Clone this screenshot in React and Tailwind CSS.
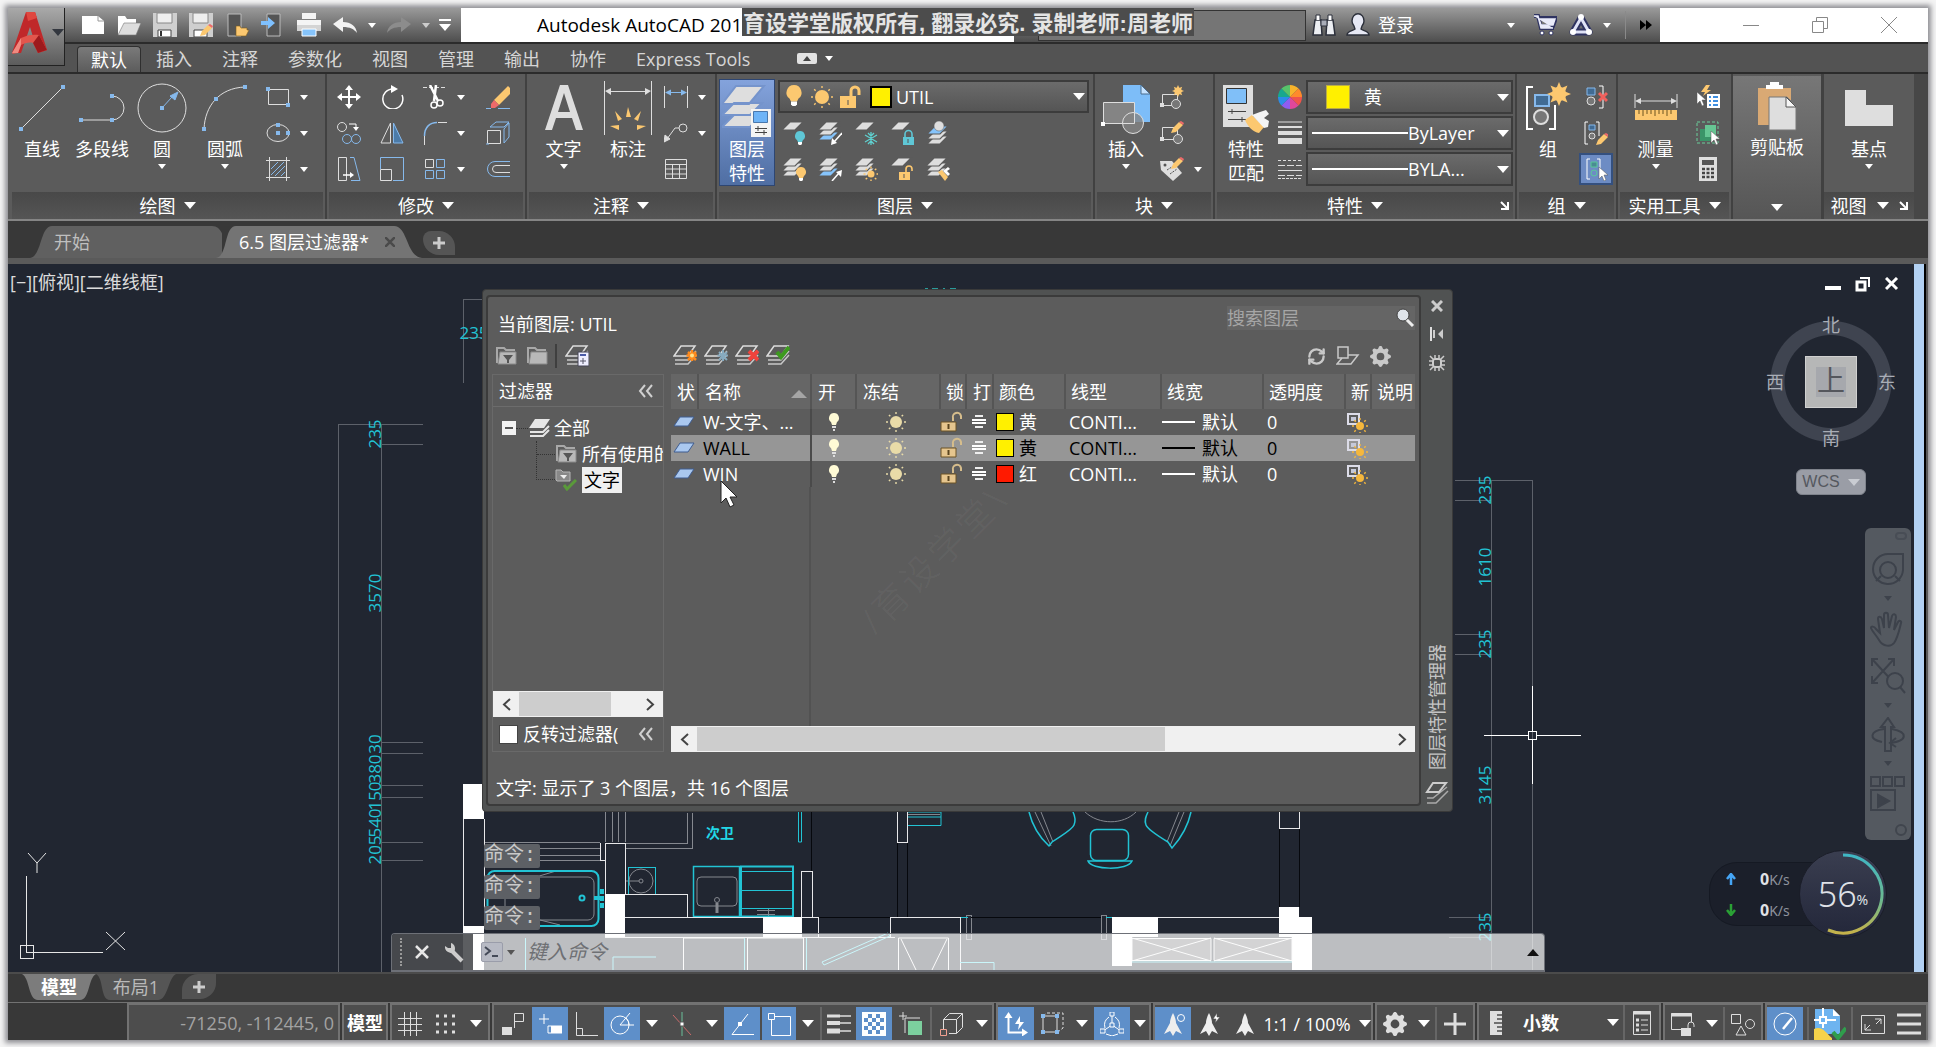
import React from "react";
import { LuRefreshCw } from "react-icons/lu";
import { BsGearFill } from "react-icons/bs";

const W = "#dedede";
const B = "#86b9ec";
const O = "#fcc870";

/* ---------- small helpers ---------- */

const Svg = ({ w = 24, h = 24, children }) => (
  <svg width={w} height={h} viewBox={`0 0 ${w} ${h}`} fill="none" stroke={W} className="shrink-0">
    {children}
  </svg>
);

const Caret = ({ big, color = "#fff" }) => (
  <svg width={big ? 12 : 8} height={big ? 7 : 5} viewBox="0 0 12 7" preserveAspectRatio="none" className="shrink-0">
    <path d="M0 0h12L6 7z" fill={color} />
  </svg>
);

const Btn = ({ label, className = "", children }) => (
  <button type="button" aria-label={label} className={`flex items-center justify-center ${className}`}>
    {children}
  </button>
);

const Dot = ({ x, y, c = B }) => <rect x={x - 2} y={y - 2} width="4" height="4" fill={c} stroke="none" />;

const Sun = ({ cx, cy, r = 4, c = O }) => (
  <g stroke={c} strokeWidth="1.4">
    <circle cx={cx} cy={cy} r={r} fill={c} stroke="none" />
    {[0, 45, 90, 135, 180, 225, 270, 315].map((a) => (
      <path key={a} d={`M${cx} ${cy - r - 2}v-2`} transform={`rotate(${a} ${cx} ${cy})`} />
    ))}
  </g>
);

// eight-pointed burst used on the "new" style commands
const Burst = ({ cx, cy, r }) => (
  <g fill={O} stroke="none">
    <circle cx={cx} cy={cy} r={r * 0.6} />
    {[0, 45, 90, 135, 180, 225, 270, 315].map((a) => (
      <path
        key={a}
        d={`M${cx} ${cy - r}l${r * 0.25} ${r * 0.6}h${-r * 0.5}z`}
        transform={`rotate(${a} ${cx} ${cy})`}
      />
    ))}
  </g>
);

const Bulb = ({ x, y, c = O }) => (
  <g stroke="none">
    <path d={`M${x} ${y}a5 5 0 0 1 3 9l-1 2h-4l-1-2a5 5 0 0 1 3-9z`} fill={c} />
    <path d={`M${x - 2} ${y + 11}h4v2l-1 1h-2l-1-1z`} fill="#fff" />
  </g>
);

const Lock = ({ x, y, c = O, open }) => (
  <g>
    <rect x={x} y={y} width="11" height="8" fill={c} stroke="none" />
    <path
      d={open ? `M${x + 7} ${y}v-3a3 3 0 0 1 6 0v2` : `M${x + 2} ${y}v-3a3 3 0 0 1 7 0v3`}
      stroke={c}
      strokeWidth="1.6"
    />
    <path d={`M${x + 5} ${y + 2}v4`} stroke="#555" />
  </g>
);

const Pencil = ({ x, y }) => (
  <g stroke="none" transform={`translate(${x} ${y})`}>
    <path d="M0 12l2-5 6-6 4 3-7 7z" fill={O} />
    <path d="M8 1l2-1 3 2-1 2z" fill="#ee6a6a" />
  </g>
);

const Pointer = ({ x, y }) => (
  <path
    transform={`translate(${x} ${y})`}
    d="M0 0v12l3-3 2 5 2-1-2-5h4z"
    fill="#fff"
    stroke="#555"
    strokeWidth=".5"
  />
);

const Layer = ({ y = 0, c = W }) => (
  <path d={`M8 ${y}h13l-8 8H0z`} fill={c} stroke="#5b5b5b" strokeWidth="1.2" />
);

const Stack = ({ colors = [W, W, W] }) => (
  <g>
    <Layer y={11} c={colors[2]} />
    <Layer y={6} c={colors[1]} />
    <Layer y={1} c={colors[0]} />
  </g>
);

/* ---------- title bar ---------- */

const Logo = () => (
  <button
    type="button"
    aria-label="AutoCAD"
    className="absolute top-0 left-0 z-10 flex h-[58px] w-[57px] items-center gap-1 border-r border-b border-[#222] bg-linear-to-b from-[#a9a9a9] to-[#5c5c5c] pb-2 pl-1"
  >
    <svg width="36" height="44" viewBox="0 0 36 44" className="shrink-0">
      <path d="M0 42L14 1h9l12 38-9 3-8-26-9 26z" fill="#c0282a" />
      <path d="M14 1h9l2 6-9 3z" fill="#e0473f" />
      <path d="M9 27c6-3 12-4 18-3l8 15-9 3-5-10c-4-1-8 0-12 2l-3 8-6 1z" fill="#e2564d" />
      <path d="M26 42l-5-10 6-8 8 15z" fill="#9d1a1d" />
      <path d="M0 42l9-15v7l-3 8z" fill="#f08a80" />
    </svg>
    <Caret big color="#33373f" />
  </button>
);

const quickAccess = [
  ["新建", <Svg><path d="M1 3h16l6 5v13H1z" fill="#fff" stroke="none" /><path d="M17 3v5h6" stroke="#999" /></Svg>],
  ["打开", <Svg><path d="M1 22V3h7l2 3h9v4H8z" fill="#fff" stroke="none" /><path d="M1 22l6-12h17l-5 12z" fill="#ddd" stroke="#777" strokeWidth=".6" /></Svg>],
  ["保存", <Svg><path d="M0 0h24v24H0z" fill="#cfcfcf" stroke="none" /><path d="M4 0h15v10H4z" fill="#eee" stroke="#888" /><path d="M5 17h13v7H5z" fill="#fff" stroke="#444" /><path d="M8 18v5" stroke="#333" strokeWidth="2" /></Svg>],
  ["另存为", <Svg><path d="M0 0h24v24H0z" fill="#cfcfcf" stroke="none" /><path d="M4 0h15v10H4z" fill="#eee" stroke="#888" /><path d="M5 17h13v7H5z" fill="#fff" stroke="#444" /><Pencil x={11} y={11} /></Svg>],
  ["从移动设备打开", <Svg><path d="M3 1h13v22H3z" fill="#555" stroke="#bbb" /><path d="M11 23V13h4l1 2h6v2h2l-3 6z" fill={O} stroke="#7a5a20" strokeWidth=".6" /></Svg>],
  ["保存到移动设备", <Svg><path d="M6 1h13v22H6z" fill="#555" stroke="#bbb" /><path d="M0 8h7V4l7 6-7 6v-4H0z" fill="#7fc1ff" stroke="none" /></Svg>],
  ["打印", <Svg><path d="M5 0h14v6H5zM0 7h24v10H0z" fill="#f4f4f4" stroke="none" /><path d="M0 12h24v6H0z" fill="#d4d4d4" stroke="none" /><path d="M5 16h14v7H5z" fill="#86c4fb" stroke="#fff" /></Svg>],
  ["放弃", <Svg><path d="M0 11l10-7v5c8 0 13 4 14 11-3-4-7-6-14-6v5z" fill="#f2f2f2" stroke="none" /></Svg>, "#fff"],
  ["重做", <Svg><path d="M24 11L14 4v5C6 9 1 13 0 20c3-4 7-6 14-6v5z" fill="#8c8c8c" stroke="none" /></Svg>, "#ccc"],
];

const TitleBar = () => (
  <header className="flex h-[34px] bg-linear-to-b from-[#9a9a9a] to-[#4e4e4e]">
    <div className="flex w-[453px] shrink-0 items-center pl-[67px]">
      {quickAccess.map(([label, icon, caret]) => (
        <div key={label} className="flex items-center">
          <Btn label={label} className="w-9">{icon}</Btn>
          {caret && <Btn label={`${label} 列表`} className="w-[18px]"><Caret color={caret} /></Btn>}
        </div>
      ))}
      <Btn label="自定义" className="ml-1 w-3 flex-col gap-[3px]">
        <span className="h-[2px] w-3 bg-white" />
        <Caret big />
      </Btn>
    </div>
    <div className="relative flex min-w-0 flex-1 items-center bg-white pl-[76px] text-black">
      <span className="text-[19px] whitespace-nowrap">Autodesk AutoCAD 201</span>
      <div className="absolute top-0 left-[281px] z-10 flex h-7 w-[452px] items-center justify-center bg-[#4c4c4c] pt-[2px] font-['Liberation_Sans','Noto_Sans_CJK_SC',sans-serif] text-[22px] font-bold whitespace-nowrap text-[#e4e4e4]">
        育设学堂版权所有, 翻录必究. 录制老师:周老师
      </div>
    </div>
    <div className="flex w-[646px] shrink-0 items-center">
      <input
        aria-label="搜索"
        className="ml-6 h-[31px] w-[268px] border border-[#333] bg-[#757575] outline-none"
      />
      <Btn label="查找" className="w-9">
        <Svg><path d="M1 22l2-15h6l1 15zM14 22l1-15h6l2 15z" fill="#eceef2" stroke="#2b2f3a" strokeWidth="1.5" /><path d="M9 7h6v6H9z" fill="#a9adb8" stroke="#2b2f3a" /><path d="M4 7V2h4v5M16 7V2h4v5" fill="#fff" stroke="#2b2f3a" /></Svg>
      </Btn>
      <Btn label="登录" className="gap-2 pl-1 text-lg text-white">
        <Svg><path d="M1 22c0-4 6-4 8-6l-1-3a6 7 0 1 1 8 0l-1 3c2 2 8 2 8 6z" fill="#e6e8f4" stroke="#2b2f3a" strokeWidth="1.4" /></Svg>
        登录
      </Btn>
      <Btn label="账户列表" className="ml-auto w-4"><Caret /></Btn>
      <Btn label="购物车" className="ml-3 w-7">
        <Svg><path d="M1 3h4l3 12h13M6 5h17l-3 8H8" stroke="#2f3361" strokeWidth="4" /><path d="M1 3h4l3 12h12M6 6h16l-2 6H8z" fill="#e9ebfa" stroke="#e9ebfa" strokeWidth="1.5" /><circle cx="9" cy="20" r="2" fill="#fff" stroke="#2f3361" /><circle cx="18" cy="20" r="2" fill="#fff" stroke="#2f3361" /></Svg>
      </Btn>
      <Btn label="A360" className="ml-2 w-7">
        <Svg><path d="M12 5l8 14H4z" stroke="#2f3361" strokeWidth="7" strokeLinejoin="round" /><path d="M12 5l8 14H4z" stroke="#dfe2f6" strokeWidth="3" /><circle cx="12" cy="4" r="3" fill="#fff" stroke="none" /><circle cx="4" cy="19" r="3" fill="#fff" stroke="none" /><circle cx="20" cy="19" r="3" fill="#fff" stroke="none" /></Svg>
      </Btn>
      <Btn label="A360 列表" className="ml-1 w-4"><Caret /></Btn>
      <span className="mx-[10px] h-7 w-px bg-[#8a8a8a]" />
      <Btn label="更多" className="mr-1 w-5">
        <Svg w={12} h={10}><path d="M0 0l6 5-6 5zM6 0l6 5-6 5z" fill="#000" stroke="none" /></Svg>
      </Btn>
    </div>
    <div className="flex w-[268px] shrink-0 items-center justify-around bg-white pr-1 pl-14">
      <Btn label="最小化"><Svg w={16} h={16}><path d="M0 8.5h16" stroke="#888" /></Svg></Btn>
      <Btn label="还原"><Svg w={16} h={16}><path d="M.5 4.5h11v11H.5zM4.5 4V.5h11v11H12" stroke="#888" /></Svg></Btn>
      <Btn label="关闭"><Svg w={16} h={16}><path d="M0 0l16 16M16 0L0 16" stroke="#888" /></Svg></Btn>
    </div>
  </header>
);

const ribbonTabs = ["默认", "插入", "注释", "参数化", "视图", "管理", "输出", "协作", "Express Tools"];

const RibbonTabs = () => (
  <nav className="flex h-8 items-end border-t-2 border-b-2 border-[#2b2b2b] bg-[#535353] pl-[69px] text-lg text-[#d6d6d6]">
    {ribbonTabs.map((tab, i) => (
      <button
        key={tab}
        type="button"
        className={
          i === 0
            ? "h-[26px] rounded-t border border-b-0 border-[#2f2f2f] bg-linear-to-b from-[#7a7a7a] to-[#5c5c5c] px-[13px] leading-6 text-white"
            : "h-[26px] px-[15px] leading-6 whitespace-nowrap"
        }
      >
        {tab}
      </button>
    ))}
    <Btn label="最小化功能区" className="ml-8 h-[28px] gap-2">
      <span className="flex h-[11px] w-5 items-center justify-center rounded-xs bg-[#e2e2e2]">
        <Svg w={8} h={5}><path d="M0 5l4-5 4 5z" fill="#444" stroke="none" /></Svg>
      </span>
      <Caret />
    </Btn>
  </nav>
);

/* ---------- ribbon ---------- */

const Launcher = () => (
  <Svg w={9} h={9}><path d="M1 1l6 6M8 1v7H1" stroke="#fff" strokeWidth="2" /></Svg>
);

const Panel = ({ title, arrow, className = "", children }) => (
  <section className={`flex shrink-0 flex-col border-r-2 border-[#414141] ${className}`}>
    <div className="flex flex-1 items-start pt-[5px]">{children}</div>
    <footer
      className={`relative mx-[2px] flex h-[27px] items-center justify-center gap-2 bg-linear-to-b from-[#484848] to-[#555] text-lg leading-6 text-white ${arrow ? "pr-5" : ""}`}
    >
      {title}
      <Caret big />
      {arrow && <span className="absolute right-1"><Launcher /></span>}
    </footer>
  </section>
);

const Big = ({ lines, arrow, className = "", children }) => (
  <button type="button" className={`flex shrink-0 flex-col items-center text-lg leading-6 text-white ${className}`}>
    <span className="flex h-[58px] items-center justify-center">{children}</span>
    {lines.map((l) => (
      <span key={l} className="whitespace-nowrap">{l}</span>
    ))}
    {arrow && <span className="mt-[3px] flex"><Caret /></span>}
  </button>
);

const Small = ({ label, arrow, className = "", children }) => (
  <span className={`flex h-9 items-center ${className}`}>
    <Btn label={label}>{children}</Btn>
    {arrow && <Btn label={`${label} 列表`} className="ml-[10px]"><Caret /></Btn>}
  </span>
);

const DrawPanel = () => (
  <Panel title="绘图" className="w-[317px]">
    <Big lines={["直线"]} className="w-16">
      <Svg w={48} h={48}><path d="M2 46L46 2" /><Dot x={3} y={45} /><Dot x={45} y={3} /></Svg>
    </Big>
    <Big lines={["多段线"]} className="w-14">
      <Svg w={48} h={32}><path d="M2 28h32a12 12 0 0 0 0-24" /><Dot x={3} y={28} /><Dot x={34} y={28} /><Dot x={34} y={4} /></Svg>
    </Big>
    <Big lines={["圆"]} arrow className="w-16">
      <Svg w={50} h={50}><circle cx="25" cy="25" r="24" /><path d="M25 25l10-11" stroke={B} /><path d="M41 9l-3 8-5-4z" fill={B} stroke={B} /><Dot x={25} y={25} /></Svg>
    </Big>
    <Big lines={["圆弧"]} arrow className="w-[62px]">
      <Svg w={48} h={48}><path d="M3 45C4 22 18 4 44 3" /><Dot x={3} y={45} /><Dot x={15} y={15} /><Dot x={44} y={3} /></Svg>
    </Big>
    <div className="ml-[10px]">
      <Small label="矩形" arrow><Svg><path d="M2.5 4.5h20v15h-20z" /><Dot x={2} y={4} /><Dot x={22} y={20} /></Svg></Small>
      <Small label="椭圆" arrow><Svg><ellipse cx="12" cy="12" rx="11" ry="8.5" /><Dot x={12} y={4} /><Dot x={12} y={12} /><Dot x={22} y={12} /></Svg></Small>
      <Small label="图案填充" arrow><Svg><path d="M0 3.5h24M0 20.5h24M3.5 0v24M20.5 0v24" /><path d="M5 12l7-7M5 18L18 5M9 19L19 9M15 19l4-4" stroke={B} /></Svg></Small>
    </div>
  </Panel>
);

const ModifyPanel = () => (
  <Panel title="修改" className="w-[200px]">
    <div className="ml-[10px] grid grid-cols-[43px_43px_63px_24px]">
      <Small label="移动"><Svg><path d="M12 2v20M2 12h20" stroke="#fff" strokeWidth="2" /><path d="M12 0l4 5H8zM12 24l4-5H8zM0 12l5-4v8zM24 12l-5-4v8z" fill="#fff" stroke="none" /></Svg></Small>
      <Small label="旋转"><Svg><path d="M13 4a10 10 0 1 0 9 6" stroke="#fff" strokeWidth="1.5" /><path d="M11 0l7 4-7 4z" fill="#fff" stroke="none" /></Svg></Small>
      <Small label="修剪" arrow><Svg><path d="M0 2.5h24" strokeDasharray="4 2" /><path d="M7 0l8 16M13 0l-2 16" stroke="#fff" strokeWidth="2.5" /><circle cx="11" cy="20" r="3" stroke="#fff" strokeWidth="1.5" /><circle cx="17" cy="18" r="3" stroke="#fff" strokeWidth="1.5" /></Svg></Small>
      <Small label="删除"><Svg><path d="M0 23.5h5M12 23.5h12" stroke={B} /><path d="M8 15L22 1l2 2v6L13 20z" fill={O} stroke="none" /><path d="M5 19l3-4 5 5-4 3H5z" fill="#ee6a6a" stroke="none" /></Svg></Small>
      <Small label="复制"><Svg><circle cx="5" cy="6" r="4.5" /><circle cx="10" cy="18" r="4.5" stroke={B} /><circle cx="19" cy="18" r="4.5" stroke={B} /><path d="M12 3h7v4" stroke="#fff" /><path d="M16 6h6l-3 4z" fill="#fff" stroke="none" /></Svg></Small>
      <Small label="镜像"><Svg><path d="M10.5 2v20H1z" /><path d="M13.5 2v20H23z" fill="#4c7ba8" stroke={B} /></Svg></Small>
      <Small label="圆角" arrow><Svg><path d="M1.5 24v-9" /><path d="M1.5 15C1.5 6 7 1.5 14 1.5" stroke={B} strokeWidth="1.5" /><path d="M15 1.5h9" /></Svg></Small>
      <Small label="分解"><Svg><path d="M1.5 9.5h13v13h-13z" /><path d="M4 6l6-5h13l-5 5zM18 22l5-6V2l-5 6z" stroke={B} /><path d="M0 23h3" stroke={B} /></Svg></Small>
      <Small label="拉伸"><Svg><path d="M1.5.5h8v23h-8z" /><path d="M13 .5h4l6 23h-9" stroke={B} /><path d="M6 18h9" stroke="#fff" strokeWidth="1.5" /><path d="M13 15l4 3-4 3z" fill="#fff" stroke="none" /></Svg></Small>
      <Small label="缩放"><Svg><path d="M.5 12V.5h23v23H13" stroke={B} /><path d="M.5 12.5h11v11H.5z" /></Svg></Small>
      <Small label="阵列" arrow><Svg><path d="M2.5 2.5h8v8h-8z" /><path d="M13.5 2.5h8v8h-8zM2.5 13.5h8v8h-8zM13.5 13.5h8v8h-8z" stroke={B} /></Svg></Small>
      <Small label="偏移"><Svg><path d="M24 4.5H9a7.5 7.5 0 0 0 0 15h15" stroke={B} /><path d="M24 8.5H10a3.5 3.5 0 0 0 0 7h14" /></Svg></Small>
    </div>
  </Panel>
);

const AnnotatePanel = () => (
  <Panel title="注释" className="w-[190px]">
    <Big lines={["文字"]} arrow className="w-[73px]">
      <Svg w={40} h={50}><path d="M1 47L16 2h8l15 45h-7l-4-12H12L8 47zM14 29h12L20 10z" fill={W} fillRule="evenodd" stroke="none" /></Svg>
    </Big>
    <Big lines={["标注"]} className="w-14">
      <Svg w={48} h={54}>
        <path d="M.5 0v54M47.5 0v54M4 10.5h40" /><path d="M1 10l6-3v7zM47 10l-6-3v7z" fill={W} stroke="none" />
        <path d="M24 26l3 10h-5zM11 30l7 8-4 2zM37 30l-7 8 4 2zM6 45l9-1v5zM42 45l-9-1v5z" fill={O} stroke="none" />
      </Svg>
    </Big>
    <div className="ml-2">
      <Small label="线性" arrow><Svg><path d="M.5 1v22M23.5 1v22" /><path d="M3 7.5h18" stroke={B} /><path d="M1 7.5l6-3v6zM23 7.5l-6-3v6z" fill={B} stroke="none" /></Svg></Small>
      <Small label="引线" arrow><Svg><circle cx="19" cy="7" r="4" /><path d="M15 7h-4L3 18" /><path d="M0 21l1-7 5 4z" fill={W} /></Svg></Small>
      <Small label="表格"><Svg><path d="M1.5 2.5h21v19h-21zM1.5 7.5h21M1.5 12h21M1.5 17h21M8.5 8v14M15.5 8v14" /></Svg></Small>
    </div>
  </Panel>
);

const Combo = ({ label, value, className = "", children }) => (
  <div className={`relative flex items-center border-2 border-[#3c3c3c] bg-linear-to-b from-[#6b6b6b] to-[#555] text-white ${className}`}>
    {children}
    <select aria-label={label} className="h-full min-w-0 flex-1 appearance-none bg-transparent text-lg outline-none">
      <option>{value}</option>
    </select>
    <span className="pointer-events-none absolute right-[2px]"><Caret big /></span>
  </div>
);

const layerTools = [
  ["关", <Svg><Layer y={1} /><Bulb x={18} y={10} c="#5fc7d6" /></Svg>],
  ["隔离", <Svg><Stack colors={[W, W, "#86c4fb"]} /><path d="M24 12l-8 9" stroke="#fff" strokeWidth="1.5" /><path d="M13 24l1-7 5 5z" fill="#fff" stroke="none" /></Svg>],
  ["冻结", <Svg><Layer y={1} /><path d="M17 11v13M11 14l12 7M23 14l-12 7M14 12l3 3 3-3M14 23l3-3 3 3" stroke="#5fd0cf" strokeWidth="1.3" /></Svg>],
  ["锁定", <Svg><Layer y={1} /><Lock x={13} y={16} c="#5fc7d6" /></Svg>],
  ["置为当前", <Svg><g transform="translate(1 4)"><Stack colors={["#86c4fb", W, W]} /></g><circle cx="13" cy="5" r="5" fill={W} stroke="#5b5b5b" strokeWidth=".5" /></Svg>],
  ["打开所有图层", <Svg><Stack /><Bulb x={19} y={10} /></Svg>],
  ["取消隔离", <Svg><Stack colors={[W, W, "#86c4fb"]} /><path d="M14 24l7-8" stroke="#fff" strokeWidth="1.5" /><path d="M24 13l-1 7-5-5z" fill="#fff" stroke="none" /></Svg>],
  ["解冻所有图层", <Svg><Stack /><Sun cx={17} cy={17} r={3.5} /></Svg>],
  ["解锁", <Svg><Layer y={1} /><Lock x={9} y={15} open /></Svg>],
  ["匹配图层", <Svg><Stack /><path d="M12 15l4-2 6 7-3 4z" fill={O} stroke="none" /><path d="M17 14l5-4 2 2-3 2 3 3-2 2z" fill="#fff" stroke="none" /></Svg>],
];

const LayerPanel = () => (
  <Panel title="图层" className="w-[378px]">
    <Big
      lines={["图层", "特性"]}
      className="ml-[2px] h-[107px] w-14 border border-[#2e4672] bg-linear-to-b from-[#84a3dc] to-[#4f6ea3]"
    >
      <Svg w={50} h={56}>
        <path d="M12 34h28L28 46H0zM12 22h28L28 34H0zM14 5h28L27 23H0z" fill={W} stroke="#7594cc" strokeWidth="2" />
        <path d="M29 28h20v28H29z" fill="#f4f4f4" stroke="none" />
        <path d="M31.5 30.5h14v11h-14z" fill="#6eb4f7" stroke="#4a78ad" />
        <path d="M33 47.5h12M33 51.5h12M36 45v5M42 49v5" stroke="#444" />
      </Svg>
    </Big>
    <div className="ml-[3px] flex flex-col">
      <Combo label="图层" value="UTIL" className="mt-px mb-[2px] h-[33px] w-[311px] pl-[5px]">
        <Svg w={18} h={26}><g transform="translate(9 1) scale(1.5)"><Bulb x={0} y={0} /></g></Svg>
        <span className="ml-[7px] flex"><Svg w={24} h={26}><Sun cx={12} cy={13} r={7} /></Svg></span>
        <span className="ml-1 flex"><Svg w={24} h={26}><path d="M2 12h16v12H2z" fill={O} stroke="none" /><path d="M13 12V7a4 4 0 0 1 8 0v4" stroke={O} strokeWidth="3" /><path d="M10 16v5" stroke="#555" /></Svg></span>
        <span className="mr-1 ml-2 h-[22px] w-[22px] border-2 border-black bg-[#fff000]" />
      </Combo>
      <div className="grid w-[180px] grid-cols-5">
        {layerTools.map(([label, icon]) => (
          <Small key={label} label={label} className="pl-1">{icon}</Small>
        ))}
      </div>
    </div>
  </Panel>
);

const BlockPanel = () => (
  <Panel title="块" className="w-[120px]">
    <Big lines={["插入"]} arrow className="ml-[3px] w-14">
      <Svg w={50} h={54}>
        <path d="M22 4h18l9 9v28H22z" fill="#7dbdf8" stroke="none" /><path d="M40 4v9h9z" fill="#c4e2ff" stroke="#4a6c8c" />
        <path d="M2.5 21.5h31v21h-31z" fill="#848484" /><circle cx="32" cy="42" r="10.5" fill="#848484" fillOpacity=".8" /><path d="M33.5 32v10.5H22" />
        <Dot x={2} y={43} c="#fff" />
      </Svg>
    </Big>
    <div className="ml-[6px]">
      <Small label="创建块"><Svg><path d="M2.5 9.5h15v11h-15z" /><circle cx="16" cy="19" r="4.5" fill="#777" /><Dot x={2} y={20} c={W} /><Burst cx={18} cy={6} r={6} /></Svg></Small>
      <Small label="编辑块"><Svg><path d="M2.5 6.5h15v12h-15z" /><circle cx="18" cy="18" r="4.5" fill="#777" /><Dot x={2} y={18} c={W} /><Pencil x={11} y={0} /></Svg></Small>
      <Small label="编辑属性" arrow><Svg><path d="M0 4h12l10 12-9 8L1 13z" fill={W} stroke="none" /><circle cx="5" cy="8" r="1.5" fill="#555" stroke="none" /><path d="M7 13l8-5M10 17l7-5" stroke="#555" strokeDasharray="2 1" /><Pencil x={11} y={0} /></Svg></Small>
    </div>
  </Panel>
);

const wheel = ["#f7b32b", "#ff8a2b", "#f0534a", "#e0479a", "#8e5cf0", "#2b8de8", "#17a88e", "#57c46a"];

const PropertiesPanel = () => (
  <Panel title="特性" arrow className="w-[302px]">
    <Big lines={["特性", "匹配"]} className="ml-[2px] w-[58px]">
      <Svg w={48} h={52}>
        <path d="M1 3h30v42H1z" fill={W} stroke="none" /><path d="M4.5 6.5h20v15h-20z" fill="#80bff8" stroke="#333" />
        <path d="M6 29.5h18M6 37.5h18M10 27v5M20 35v5" stroke="#444" />
        <path d="M23 38l7-5 12 12-5 6c-6-1-11-6-14-13z" fill={O} stroke="none" /><path d="M30 33l8-3 6-2 3 4-5 4 5 3-1 6-4 1z" fill="#f4f4f4" stroke="none" />
      </Svg>
    </Big>
    <div className="ml-[2px]">
      <Small label="对象颜色">
        <svg width="26" height="26" viewBox="-13 -13 26 26">
          {wheel.map((c, i) => (
            <path key={c} d="M0 0V-12A12 12 0 0 1 8.5-8.5z" fill={c} transform={`rotate(${i * 45})`} />
          ))}
        </svg>
      </Small>
      <Small label="线宽"><Svg w={26}><path d="M1 1h24" /><path d="M1 6h24" strokeWidth="2" /><path d="M1 12h24" strokeWidth="4" /><path d="M1 20h24" strokeWidth="6" /></Svg></Small>
      <Small label="线型"><Svg w={26}><path d="M1 3.5h24" strokeDasharray="3 2" /><path d="M1 8.5h24M1 18.5h24" strokeDasharray="7 2" /><path d="M1 13.5h24" /><path d="M1 21.5h24" strokeDasharray="3 1" /></Svg></Small>
    </div>
    <div className="mt-px ml-[3px] flex w-[207px] flex-col gap-[2px]">
      <Combo label="颜色" value="黄" className="h-[34px] pl-[18px]">
        <span className="mr-[14px] h-6 w-6 border border-[#b9ac46] bg-[#fff000]" />
      </Combo>
      <Combo label="线宽" value="ByLayer" className="h-[34px] pl-1"><span className="h-[2px] w-24 bg-white" /></Combo>
      <Combo label="线型" value="BYLA..." className="h-[34px] pl-1"><span className="h-[2px] w-24 bg-white" /></Combo>
    </div>
  </Panel>
);

const GroupPanel = () => (
  <Panel title="组" className="w-[101px]">
    <Big lines={["组"]} className="w-[62px]">
      <Svg w={48} h={54}>
        <path d="M9 6H3v42h6M25 48h6V24" stroke="#fff" strokeWidth="2" />
        <path d="M11 14h14v11H11z" fill="#416b93" stroke={B} strokeWidth="2" /><circle cx="17" cy="36" r="7" fill="#777" strokeWidth="2" />
        <Burst cx={35} cy={13} r={12} />
      </Svg>
    </Big>
    <div className="flex flex-col items-center">
      <Small label="解除编组"><Svg><path d="M3 3h8v7H3z" fill="#416b93" stroke={B} /><circle cx="7" cy="16" r="4" fill="#777" /><path d="M15 1h4v22h-4" stroke="#fff" /><path d="M15 8l8 8M23 8l-8 8" stroke="#f0605c" strokeWidth="3" /></Svg></Small>
      <Small label="组编辑"><Svg><path d="M4 1H1v22h3M12 1h3v14" stroke="#fff" /><path d="M5 4h6v5H5z" fill="#416b93" stroke={B} /><circle cx="8" cy="15" r="3" fill="#777" /><Pencil x={12} y={12} /></Svg></Small>
      <Small label="启用组选择">
        <span className="flex h-8 w-[34px] items-center justify-center border-2 border-[#34507f] bg-[#6d8cc4]">
          <Svg><path d="M6 2H3v20h3M13 2h3v9" stroke="#fff" /><path d="M7 5h6v5H7z" stroke="#5ac79a" fill="#4a8c93" /><circle cx="10" cy="16" r="3" stroke="#5ac79a" /><Pointer x={15} y={10} /></Svg>
        </span>
      </Small>
    </div>
  </Panel>
);

const UtilPanel = () => (
  <Panel title="实用工具" className="w-[115px]">
    <Big lines={["测量"]} arrow className="w-[75px]">
      <Svg w={44} h={30}>
        <path d="M1 1v14M43 1v14M4 8h36" /><path d="M1 8l6-3v6zM43 8l-6-3v6z" fill={W} stroke="none" />
        <path d="M1 17h42v10H1z" fill={O} stroke="none" /><path d="M5 17v4M9 17v6M13 17v4M17 17v4M21 17v6M25 17v4M29 17v4M33 17v6M37 17v4" stroke="#6d5520" />
      </Svg>
    </Big>
    <div className="ml-[3px]">
      <Small label="快速选择"><Svg><path d="M10 0L5 7h4l-2 4 8-6h-4l3-5z" fill={O} stroke="none" /><path d="M11 9h13v14H11z" fill="#fff" stroke="none" /><path d="M13 12h2M13 16h2M13 20h2M17 12h5M17 16h5M17 20h5" stroke="#3e8ee0" strokeWidth="2" /><Pointer x={1} y={7} /></Svg></Small>
      <Small label="全部选择"><Svg><path d="M1 1h21v21H1z" stroke="#6bcf9b" strokeDasharray="3 2" /><path d="M4 8h12v12H4z" fill="#3b9468" stroke="none" /><path d="M9 4h11v12H9z" fill="#66c593" stroke="none" /><Pointer x={15} y={10} /></Svg></Small>
      <Small label="快速计算器" className="pl-[3px]"><Svg w={18}><path d="M0 0h18v24H0z" fill={W} stroke="none" /><path d="M3 3h12v5H3z" fill="#555" stroke="none" /><path d="M3 12h12M3 16h12M3 20h12" stroke="#444" strokeWidth="2.5" strokeDasharray="3 1.5" /></Svg></Small>
    </div>
  </Panel>
);

const Ribbon = () => (
  <div className="flex h-[145px] overflow-hidden bg-[#5b5b5b] pl-[2px]">
    <DrawPanel />
    <ModifyPanel />
    <AnnotatePanel />
    <LayerPanel />
    <BlockPanel />
    <PropertiesPanel />
    <GroupPanel />
    <UtilPanel />
    <section className="mt-[2px] flex w-[88px] shrink-0 flex-col items-center justify-between bg-linear-to-b from-[#777] to-[#565656] pt-px pb-2">
      <Big lines={["剪贴板"]}>
        <Svg w={40} h={52}>
          <path d="M1 8h33v37H1z" fill="#d9a974" stroke="none" /><path d="M9 9V5h4V2h9v3h4v4z" fill="#fff" stroke="none" />
          <path d="M12 17h18l9 9v24H12z" fill={W} stroke="#777" /><path d="M29 17v10h10z" fill="#f6f6f6" stroke="#555" />
        </Svg>
      </Big>
      <Caret big />
    </section>
    <div className="w-[3px] shrink-0 bg-[#414141]" />
    <section className="flex w-[90px] shrink-0 flex-col">
      <div className="flex flex-1 justify-center pt-[5px]">
        <Big lines={["基点"]} arrow>
          <Svg w={48} h={40}><path d="M0 2h21v15h27v21H0z" fill={W} stroke="none" /></Svg>
        </Big>
      </div>
      <footer className="flex h-[27px] items-center justify-center gap-[10px] bg-linear-to-b from-[#484848] to-[#555] text-lg leading-6 text-white">
        视图
        <Caret big />
        <Launcher />
      </footer>
    </section>
    <div className="flex-1 bg-[#474747]" />
  </div>
);

/* ---------- drawing file tabs ---------- */

const FileTabs = () => (
  <div className="flex h-[45px] items-end border-t-2 border-b-6 border-t-[#858585] border-b-[#5a5a5a] bg-[#383838] pl-[22px]">
    <button type="button" className="relative h-8 w-48 pl-6 text-left text-lg text-[#bfbfbf]">
      <svg className="absolute inset-0 h-full w-full" viewBox="0 0 192 32" preserveAspectRatio="none">
        <path d="M0 32C12 30 10 0 22 0h160c14 0 12 24 18 32z" fill="#606060" />
      </svg>
      <span className="relative">开始</span>
    </button>
    <button type="button" className="relative flex h-8 w-[200px] items-center gap-4 pl-[17px] text-lg whitespace-nowrap text-white">
      <svg className="absolute inset-0 h-full w-full overflow-visible" viewBox="0 0 200 32" preserveAspectRatio="none">
        <path d="M-6 32C6 30 2 0 14 0h158c14 0 12 30 28 32z" fill="#747474" />
      </svg>
      <span className="relative">6.5 图层过滤器*</span>
      <span className="relative"><Svg w={10} h={10}><path d="M0 0l10 10M10 0L0 10" stroke="#4a4a4a" strokeWidth="2.5" /></Svg></span>
    </button>
    <Btn label="新图形" className="mb-[3px] ml-[1px] h-6 w-8 rounded-tl-lg rounded-tr-2xl rounded-bl-2xl bg-[#555]">
      <Svg w={12} h={12}><path d="M6 0v12M0 6h12" stroke="#ccc" strokeWidth="3" /></Svg>
    </Btn>
  </div>
);

/* ---------- floor plan ---------- */

const dims = [
  [381, 434, "235"], [381, 593, "3570"], [381, 744, "30"], [381, 769, "380"], [381, 796, "150"], [381, 823, "540"], [381, 850, "205"],
  [1491, 490, "235"], [1491, 567, "1610"], [1491, 644, "235"], [1491, 785, "3145"], [1491, 927, "235"],
];

const Plan = () => (
  <svg
    className="absolute inset-0 h-full w-full"
    viewBox="8 264 1920 708"
    preserveAspectRatio="xMinYMin slice"
    fill="none"
    stroke="#85888f"
    strokeWidth="1"
    shapeRendering="crispEdges"
  >
    <g stroke="#5d616a">
      <path d="M338.5 424v548M381.5 424v548M338 424.5h85M381 444.5h42M381 742.5h42M381 753.5h42M381 785.5h42M381 797.5h42M381 842.5h42M381 860.5h42" />
      <path d="M463.5 383v-84H484M463 337.5h20" />
      <path d="M1491.5 480v492M1532.5 480v492M1455 480.5h77M1455 500.5h36M1455 634.5h36M1455 654.5h36M1449 917.5h42M1449 937.5h42" />
    </g>
    <path d="M925 288.5h3M932 288.5h6M943 288.5h2M950 288.5h6" stroke="#2a9a9a" strokeWidth="2" />

    {/* grey outlines */}
    <path d="M605.5 812v30M612.5 812v30M618.5 812v30M625.5 812v30M484 842.5h116M484 848.5h116M484 855.5h116M484 860.5h116M625 843.5h62v-31M625 848.5h67v-36" />
    <g shapeRendering="auto">
      <rect x="505" y="877" width="89" height="43" rx="6" />
      <path d="M536 877l20-6M540 920l20 5" />
      <circle cx="641" cy="881" r="12" /><circle cx="641" cy="881" r="2" /><path d="M626 881h13" />
      <rect x="697" y="877" width="40" height="29" rx="4" /><circle cx="717" cy="900" r="2.5" /><path d="M717 903v10" strokeWidth="3" />
      <path d="M1085 812c14 13 38 13 51 0" />
      <path d="M1035 812l16 34M1041 812l12 30M1184 812l-14 34M1179 812l-12 30" />
    </g>
    <path d="M907 814.5h33M966.5 915h5v24h-5zM1101.5 915h5v24h-5zM757 910.5h18M757 914.5h18M768 909v7" />

    {/* black wall lines */}
    <path d="M811.5 812v60M897.5 842v75M907.5 842v75M1279.5 828v79M1299.5 828v79M818 917.5h72M971 917.5h130" stroke="#06080d" />

    {/* cyan fittings */}
    <g stroke="#22c3d4" shapeRendering="auto">
      <rect x="487.5" y="871" width="111" height="55" rx="7" strokeWidth="2" />
      <circle cx="582" cy="898" r="2.5" strokeWidth="2" />
      <path d="M594 898h8M602 889v5M602 896v5M602 903v5" strokeWidth="4" />
      <rect x="628.5" y="867.5" width="27" height="27" />
      <rect x="693.5" y="866.5" width="46" height="50" strokeWidth="1.5" /><rect x="741" y="866.5" width="52" height="50" strokeWidth="2" />
      <path d="M741 871.5h52M741 890.5h52M741 908.5h52M798.5 812v30h3v-30M907 812h34v13.5h-34M907 817h34" />
      <rect x="1090.5" y="829.5" width="38" height="31" rx="6" strokeWidth="1.5" />
      <path d="M1088 861c3 9 40 10 44 0z" strokeWidth="1.5" />
      <path d="M1029 812c3 12 9 24 20 34l3-4c10-7 20-12 22-17s1-9-1-13" strokeWidth="1.5" />
      <path d="M1191 812c-3 14-10 26-19 36l-4-6c-10-6-20-12-22-17s0-9 2-13" strokeWidth="1.5" />
      <path d="M960 917.5h8M1106 917.5h6" />
    </g>

    {/* white walls */}
    <path
      d="M463 784h21v35h-21zM463 926h21v46h-21zM605 894h20v43h-20zM763 917h39v20h-39zM1112 917h46v20h-26v29h-20zM1279 907h20v10h13v55h-20v-35h-13z"
      fill="#fff"
      stroke="none"
    />
    <g stroke="#e8e8ea">
      <path d="M463.5 819v107M484.5 819v107M605.5 843h19.5v51M605.5 843v51M600.5 843v17h5" />
      <path d="M625 894.5h62v22.5M625 917.5h138M801.5 917v-46h10.500v46M802 917.5h16v20M802 937.5h16M890.5 937v-20h70v55M897.5 812v30h10v-30M1158 917.5h121M1279.5 812v16h20v-16M605 937.5h290" />
    </g>
    <text x="706" y="838" fontSize="14" fontWeight="bold" fill="#22d7e6" stroke="none">次卫</text>

    {/* furniture under the command line */}
    <g stroke="#f4f4f4" shapeRendering="auto">
      <path d="M683.5 972v-34h61v34M747.5 972v-34h56v34M898.5 972v-34h50v34M901 939l16 33M947 939l-16 33" />
      <path d="M1132 938.5h79v22h-79zM1214 938.5h78v22h-78zM1132 938l79 23M1132 961l79-23M1214 938l78 23M1214 961l78-23" fill="#6b6d70" />
      <path d="M525.5 938v34M744.5 938v34M806.5 938v34M822 962l66-29 2 3-66 29zM960 962.5h34v10M1132 962h160M613 972v-15h43" stroke="#4fe0ee" />
    </g>

    <g fill="#22c3d4" stroke="none" fontSize="17" textAnchor="middle">
      {dims.map(([x, y, t]) => (
        <text key={`${x}-${y}`} x={x} y={y} transform={`rotate(-90 ${x} ${y})`}>{t}</text>
      ))}
      <text x="474" y="339">235</text>
    </g>

    {/* UCS icon and crosshair */}
    <g stroke="#e6e6e6">
      <path d="M26.5 876v77M26 952.5h77M20.5 945.5h13v13h-13z" />
      <path d="M28 853l9 10 9-10M37 863v10M106 932l19 18M125 932l-19 18" shapeRendering="auto" />
      <path d="M1532.5 686v45M1532.5 739v45M1484 735.5h44M1537 735.5h44M1528.5 731.5h8v8h-8z" stroke="#fff" />
    </g>
  </svg>
);

/* ---------- layer properties manager ---------- */

const ScrollBar = ({ label, thumb }) => (
  <div className="flex h-[26px] items-center bg-[#f0f0f0]">
    <Btn label={`${label} 向左`} className="h-full w-[26px]"><Svg w={9} h={13}><path d="M8 1L2 6.5l6 5.5" stroke="#444" strokeWidth="2" /></Svg></Btn>
    <div className="h-6 flex-1"><div className={`h-full bg-[#cdcdcd] ${thumb}`} /></div>
    <Btn label={`${label} 向右`} className="h-full w-[26px]"><Svg w={9} h={13}><path d="M1 1l6 5.5L1 12" stroke="#444" strokeWidth="2" /></Svg></Btn>
  </div>
);

const Folder = ({ children }) => (
  <Svg w={22} h={20}>
    <path d="M2 17V2h7l2 2h9" stroke="#a8a8a8" strokeWidth="2" /><path d="M5 6h16v12H3z" fill="#b8b8b8" stroke="#8a8a8a" />
    {children}
  </Svg>
);

const Funnel = <path d="M8 9h10l-4 5v3h-2v-3z" fill="#555" stroke="none" />;

const MiniStack = ({ children }) => (
  <Svg>
    <path d="M2 20h13l8-9M2 16h13l8-9" stroke="#c8c8c8" strokeWidth="1.5" />
    <path d="M8 2h14l-7 10H1z" stroke="#dcdcdc" strokeWidth="1.5" />
    {children}
  </Svg>
);

const Chevrons = () => (
  <Svg w={16} h={14}><path d="M7 1L2 7l5 6M14 1L9 7l5 6" stroke="#cfcfcf" strokeWidth="2" /></Svg>
);

const columns = [
  ["状", "w-[27px] pl-[6px]"],
  ["名称", "w-[113px] pl-[6px]"],
  ["开", "w-[45px] pl-[6px]"],
  ["冻结", "w-[84px] pl-[6px]"],
  ["锁", "w-[26px] pl-[5px]"],
  ["打", "w-[27px] pl-[6px]"],
  ["颜色", "w-[72px] pl-[5px]"],
  ["线型", "w-[96px] pl-[5px]"],
  ["线宽", "w-[102px] pl-[5px]"],
  ["透明度", "w-[82px] pl-[5px]"],
  ["新", "w-[26px] pl-[5px]"],
  ["说明", "pl-[5px]"],
];

const layers = [
  { name: "W-文字、...", color: "黄", swatch: "bg-[#fff000]" },
  { name: "WALL", color: "黄", swatch: "bg-[#fff000]", selected: true },
  { name: "WIN", color: "红", swatch: "bg-[#ff1a00]" },
];

const LayerRow = ({ layer }) => (
  <tr className={layer.selected ? "h-[26px] bg-[#969696] text-black" : "h-[26px]"}>
    <td className="pl-[2px]"><Svg w={22} h={14}><path d="M7 2h14l-6 9H1z" fill="#aac8ef" stroke="#3f5d90" /></Svg></td>
    <td className="border-r-2 border-[#4a4a4a] pl-[5px] whitespace-nowrap">{layer.name}</td>
    <td className="pl-[15px]"><Svg w={14} h={22}><path d="M7 2a5 5 0 0 1 3 9l-1 3H5l-1-3a5 5 0 0 1 3-9z" fill="#fffbd6" stroke="none" /><path d="M5 16h4M6 19h2" stroke="#ddd" strokeWidth="2" /></Svg></td>
    <td className="pl-[28px]"><Svg w={24} h={24}><Sun cx={12} cy={12} r={6} c="#e9dba8" /></Svg></td>
    <td><Svg w={24} h={22}><path d="M1 11h15v9H1z" fill="#e5c58e" stroke="#6a5327" /><path d="M13 10V7a4 4 0 0 1 8-2v3" stroke="#d6bd8c" strokeWidth="2" /><path d="M8.5 13v5" stroke="#5a4520" strokeWidth="2" /></Svg></td>
    <td className="pl-[5px]"><Svg w={16} h={18}><path d="M4 3h8M4 14h8" stroke="#eee" strokeWidth="2" /><path d="M1 7h14M1 10h14" stroke="#fff" strokeWidth="2" /></Svg></td>
    <td>
      <span className="flex items-center gap-[5px] pl-[3px]">
        <span className={`h-[18px] w-[18px] border border-black ${layer.swatch}`} />
        {layer.color}
      </span>
    </td>
    <td className="pl-1">CONTI...</td>
    <td>
      <span className="flex items-center gap-[7px] pl-px">
        <span className={layer.selected ? "h-[2px] w-[33px] bg-black" : "h-[2px] w-[33px] bg-white"} />
        默认
      </span>
    </td>
    <td className="pl-1">0</td>
    <td><Svg w={24} h={22}><path d="M3 3h11v10H3z" stroke="#dcdce8" strokeWidth="2" /><path d="M6 6h5v4H6z" fill="#c5c9da" stroke="none" /><Sun cx={15} cy={15} r={4} c="#f5b73c" /></Svg></td>
    <td />
  </tr>
);

const LayerManager = () => (
  <div className="absolute top-[25px] left-[474px] flex h-[523px] w-[971px] rounded border border-[#3a3a3a] bg-[#505252] text-lg leading-6 text-white">
    <div className="relative my-[5px] ml-[3px] flex flex-1 flex-col rounded border-2 border-[#3b3b3b] bg-[#5c5c5c] px-1 pt-[9px]">
      <div className="flex items-start justify-between pl-[6px]">
        <span className="mt-[6px]">当前图层: UTIL</span>
        <label className="flex h-6 w-[188px] items-center bg-[#656565]">
          <input aria-label="搜索图层" placeholder="搜索图层" className="w-full min-w-0 flex-1 bg-transparent outline-none placeholder:text-[#a6a6a6]" />
          <Svg w={20} h={20}><path d="M11 11l7 7" stroke="#eee" strokeWidth="3" /><circle cx="8" cy="7" r="6" fill="#dfe4ea" stroke="#444" /></Svg>
        </label>
      </div>
      <div className="mt-1 flex h-8 items-center">
        <Btn label="新建特性过滤器" className="w-7"><Folder>{Funnel}</Folder></Btn>
        <Btn label="新建组过滤器" className="ml-[3px] w-7"><Folder /></Btn>
        <span className="mr-2 ml-1 h-6 w-[2px] bg-[#3f3f3f]" />
        <Btn label="图层状态管理器"><MiniStack><path d="M13 8h11v14H13z" fill="#eef" stroke="#445" /><path d="M15 11h6" stroke="#4a5aa8" strokeWidth="2" /><path d="M15 17h6M18 14v6" stroke="#556" /></MiniStack></Btn>
        <div className="ml-[84px] flex gap-[7px]">
          <Btn label="新建图层"><MiniStack><g stroke="#ff8a1c" strokeWidth="2.5"><path d="M19 6v11M13.5 11.5h11M15 8l8 8M23 8l-8 8" /></g><circle cx="19" cy="11.5" r="2" fill="#ffe28a" stroke="none" /></MiniStack></Btn>
          <Btn label="冻结的新图层"><MiniStack><path d="M19 6v11M13.5 11.5h11M15 8l8 8M23 8l-8 8" stroke="#86aabf" strokeWidth="2" /></MiniStack></Btn>
          <Btn label="删除图层"><MiniStack><path d="M14 7l9 9M23 7l-9 9" stroke="#f0433c" strokeWidth="4" /></MiniStack></Btn>
          <Btn label="置为当前"><MiniStack><path d="M11 8l4 5 8-10" stroke="#3d9a1f" strokeWidth="4" /></MiniStack></Btn>
        </div>
        <div className="mr-6 ml-auto flex items-center gap-[10px] text-[#c9c9c9]">
          <Btn label="刷新"><LuRefreshCw size={19} strokeWidth={3} /></Btn>
          <Btn label="切换替代亮显"><Svg w={24} h={22}><path d="M2 2h10v11H2z" stroke="#c9c9c9" strokeWidth="1.5" /><path d="M12 10h10l-7 9H1l5-6" stroke="#c9c9c9" strokeWidth="1.5" /></Svg></Btn>
          <Btn label="设置"><BsGearFill size={21} /></Btn>
        </div>
      </div>
      <div className="mt-[2px] flex h-[378px] gap-[7px]">
        <aside className="flex w-[172px] flex-col overflow-hidden border border-[#696969]">
          <div className="flex h-8 items-center justify-between border-b border-[#6c6c6c] pr-[9px] pl-[6px]">
            过滤器
            <Btn label="收拢过滤器树"><Chevrons /></Btn>
          </div>
          <ul className="flex-1 overflow-hidden pt-2 whitespace-nowrap">
            <li className="flex h-[26px] items-center pl-[9px]">
              <Btn label="收拢" className="h-[14px] w-[14px] bg-[#f2f2f2]"><span className="h-[2px] w-2 bg-[#555]" /></Btn>
              <span className="w-3 border-t border-dotted border-[#333]" />
              <Svg w={22} h={22}><path d="M2 15h13l6-6M2 19h13l6-6" stroke="#e6e6e6" strokeWidth="2" /><path d="M7 2h15l-6 9H1z" fill="#e6e6e6" stroke="none" /></Svg>
              <span className="ml-1">全部</span>
            </li>
            <li className="ml-[43px] flex h-[26px] items-center border-l border-dotted border-[#333]">
              <span className="w-[18px] shrink-0 border-t border-dotted border-[#333]" />
              <Folder>{Funnel}</Folder>
              <span className="ml-[5px]">所有使用的</span>
            </li>
            <li className="ml-[43px] flex h-[26px] items-center">
              <span className="h-[13px] w-[19px] shrink-0 self-start border-b border-l border-dotted border-[#333]" />
              <Svg w={22} h={22}><path d="M1 11V1h5l2 2h7v9H2z" fill="#888" stroke="#b5b5b5" /><path d="M5 6h7l-3 4z" fill="#eee" stroke="none" /><path d="M9 16l3 4 9-9" stroke="#5a9a3a" strokeWidth="3" /></Svg>
              <span className="ml-[5px] bg-[#f0f0f0] px-[2px] leading-[26px] text-black">文字</span>
            </li>
          </ul>
          <ScrollBar label="过滤器" thumb="w-[92px]" />
          <div className="flex h-[34px] items-center pr-[9px] pl-[6px]">
            <label className="flex items-center gap-[5px] whitespace-nowrap">
              <input type="checkbox" className="h-[19px] w-[19px] shrink-0 appearance-none border border-[#444] bg-white" />
              反转过滤器(
            </label>
            <Btn label="收拢" className="ml-auto"><Chevrons /></Btn>
          </div>
        </aside>
        <div className="flex flex-1 flex-col">
          <table className="w-full table-fixed border-collapse">
            <thead>
              <tr className="h-[35px] bg-[#666]">
                {columns.map(([name, cls], i) => (
                  <th
                    key={name}
                    className={`relative overflow-hidden border-r-2 border-[#555] text-left font-normal whitespace-nowrap last:border-r-0 ${cls}`}
                  >
                    {name}
                    {i === 1 && (
                      <span className="absolute top-4 right-[3px]"><Svg w={16} h={8}><path d="M0 8l8-8 8 8z" fill="#a5a5a5" stroke="none" /></Svg></span>
                    )}
                  </th>
                ))}
              </tr>
            </thead>
            <tbody>
              {layers.map((layer) => (
                <LayerRow key={layer.name} layer={layer} />
              ))}
            </tbody>
          </table>
          <div className="w-[140px] flex-1 border-r-2 border-[#525252]" />
          <ScrollBar label="图层列表" thumb="w-[468px]" />
        </div>
      </div>
      <p className="mt-6 pl-1">文字: 显示了 3 个图层，共 16 个图层</p>
      <span className="pointer-events-none absolute top-[250px] left-[350px] -rotate-45 text-[36px] tracking-widest whitespace-nowrap text-white/[0.03]">
        /育设学堂\
      </span>
    </div>
    <div className="flex w-[31px] flex-col items-center pt-[9px] pb-[5px]">
      <Btn label="关闭" className="h-[14px]"><Svg w={12} h={12}><path d="M1 1l10 10M11 1L1 11" stroke="#ccc" strokeWidth="3" /></Svg></Btn>
      <Btn label="自动隐藏" className="mt-[14px] h-[14px]"><Svg w={13} h={14}><path d="M1 0v14" strokeWidth="2" /><path d="M3 3h2v8H3zM13 2v10L8 7z" fill="#ccc" stroke="none" /></Svg></Btn>
      <Btn label="特性" className="mt-[14px] h-4">
        <Svg w={16} h={16}>
          <rect x="4" y="4" width="8" height="8" rx="2" stroke="#ccc" strokeWidth="2" />
          <path d="M1 1l3 3M15 1l-3 3M1 15l3-3M15 15l-3-3M6 0v3M10 0v3M6 13v3M10 13v3M0 6h3M0 10h3M13 6h3M13 10h3" stroke="#ccc" strokeWidth="1.5" />
        </Svg>
      </Btn>
      <span className="mt-auto rotate-180 leading-6 text-[#c4c4c4] [text-orientation:sideways] [writing-mode:vertical-rl]">
        图层特性管理器
      </span>
      <span className="mt-3">
        <Svg><path d="M2 16h6L22 5M2 21h9L23 9" stroke="#aaa" strokeWidth="1.5" /><path d="M8 1h13l-7 9H2z" stroke="#ccc" strokeWidth="2" /></Svg>
      </span>
    </div>
    <svg className="absolute top-[190px] left-[237px]" width="19" height="29" viewBox="0 0 19 29">
      <path d="M1 1v22l5-5 4 9 4-2-4-8h7z" fill="#fff" stroke="#222" />
    </svg>
  </div>
);

/* ---------- canvas overlays ---------- */

const ViewCube = () => (
  <div className="absolute top-[10px] right-[22px] flex w-[150px] flex-col items-center">
    <div className="flex w-full items-center justify-end gap-[14px] pr-[7px]">
      <Btn label="最小化视口" className="h-5"><Svg w={16} h={14}><path d="M0 11h16" stroke="#fff" strokeWidth="4" /></Svg></Btn>
      <Btn label="还原视口" className="h-5"><Svg w={16} h={16}><path d="M2 6h8v8H2z" stroke="#fff" strokeWidth="3" /><path d="M5 2h9v9" stroke="#fff" strokeWidth="2" /></Svg></Btn>
      <Btn label="关闭视口" className="h-5"><Svg w={14} h={14}><path d="M1 1l11 11M12 1L1 12" stroke="#fff" strokeWidth="3" /></Svg></Btn>
    </div>
    <div className="mt-5 grid h-[135px] w-[132px] grid-cols-[20px_1fr_20px] grid-rows-[22px_1fr_22px] place-items-center bg-[radial-gradient(circle,transparent_46px,#3f4450_47px,#3f4450_60px,transparent_61px)] text-lg leading-5 text-[#a9adb6]">
      <span className="col-start-2">北</span>
      <span className="col-start-1 row-start-2">西</span>
      <button type="button" className="row-start-2 flex h-[52px] w-[52px] items-center justify-center border border-[#d0d0d0] bg-[#b6b7b7]">
        <span className="flex h-[30px] w-[30px] items-center justify-center bg-[#a6a8ad] font-['Liberation_Serif','Noto_Sans_CJK_SC',serif] text-[28px] leading-[28px] text-[#55575d]">上</span>
      </button>
      <span className="row-start-2">东</span>
      <span className="col-start-2 row-start-3">南</span>
    </div>
    <button type="button" className="mt-5 flex h-[26px] w-[70px] items-center justify-center gap-2 rounded-md border border-[#7f838c] bg-[#9a9da6] font-['Liberation_Sans',sans-serif] text-base text-[#55585f]">
      WCS
      <Caret big color="#c9ccd2" />
    </button>
  </div>
);

const navIcons = [
  ["全导航控制盘", <Svg w={36} h={36}><path d="M18 2h15v16a15 15 0 1 1-15-16z" /><circle cx="18" cy="18" r="8" /><path d="M11 24l-5 5M25 24l5 5" /></Svg>, true],
  ["平移", <Svg w={36} h={38}><path d="M9 30c-3-5-7-9-8-12 0-2 3-2 5 1l4 4L8 9c0-3 3-3 4 0l2 9V5c0-3 4-3 4 0l1 13 3-12c1-3 4-2 4 1l-2 13 4-8c1-2 4-1 3 1-2 8-3 14-7 20-3 4-11 4-15-3z" /></Svg>],
  ["范围缩放", <Svg w={36} h={38}><path d="M2 2l22 24M24 2L2 26M2 9V2h6M18 2h6v7M2 19v7h6" /><circle cx="25" cy="24" r="8" fill="#545960" /><path d="M30 30l5 6" /></Svg>, true],
  ["动态观察", <Svg w={36} h={36}><path d="M15 34V10h-4l7-9 6 9h-3v24z" /><path d="M14 12c-14 2-16 10-2 13M22 12c16 3 16 12-2 14" /><path d="M26 21l-6 5 6 4" /></Svg>, true],
  ["ShowMotion", <Svg w={36} h={38}><path d="M1 2h9v9H1zM13 2h9v9h-9zM25 2h9v9h-9zM1 15h24v20H1z" /><path d="M8 20l11 6-11 6z" fill="#3d424b" /></Svg>],
];

const NavBar = () => (
  <div className="absolute top-[264px] right-[17px] flex h-[312px] w-[46px] flex-col items-center gap-[9px] rounded-md bg-[#545960] pt-6">
    {navIcons.map(([label, icon, arrow]) => (
      <div key={label} className="flex flex-col items-center gap-2">
        <Btn label={label}><span className="[&_svg]:stroke-[#3d424b] [&_svg]:stroke-2">{icon}</span></Btn>
        {arrow && <Caret color="#3d424b" />}
      </div>
    ))}
    <span className="absolute right-1 bottom-1 h-3 w-3 rounded-full border-2 border-[#40454d]" />
    <span className="absolute top-1 right-1 h-2 w-3 rounded-full border-2 border-[#484d55]" />
  </div>
);

const speeds = [
  ["上传", "#45a5f5", "M5 12V3M1 6l4-5 4 5"],
  ["下载", "#2aa135", "M5 0v9M1 6l4 5 4-5"],
];

const NetMeter = () => (
  <div className="absolute right-[41px] bottom-[32px] flex h-[92px] items-center font-['Noto_Sans',sans-serif]">
    <div className="flex h-[64px] w-[138px] flex-col rounded-l-[28px] border border-[#151923] bg-[#1b1f2a] pl-4">
      {speeds.map(([label, color, d]) => (
        <div key={label} className="flex flex-1 items-center gap-6">
          <Svg w={10} h={12}><path d={d} stroke={color} strokeWidth="2.5" /></Svg>
          <span className="text-sm text-[#8d929c]"><b className="text-base text-[#e0e2e6]">0</b>K/s</span>
        </div>
      ))}
    </div>
    <div className="relative -ml-12 flex h-[88px] w-[88px] items-center justify-center rounded-full border border-[#1a1d28] bg-linear-to-b from-[#3a3e50] to-[#23273a] text-[#dfe1e7]">
      <svg className="absolute inset-0" width="86" height="86" viewBox="0 0 86 86" fill="none">
        <defs>
          <linearGradient id="meter" x1="0" y1="0" x2="0" y2="1">
            <stop offset="0" stopColor="#3fb6c4" />
            <stop offset=".6" stopColor="#6fb98d" />
            <stop offset="1" stopColor="#c5b24a" />
          </linearGradient>
        </defs>
        <path d="M43 4a39 39 0 1 1-15 75" stroke="url(#meter)" strokeWidth="3" />
      </svg>
      <span className="text-[34px] font-light">56</span>
      <span className="mt-3 text-sm">%</span>
    </div>
  </div>
);

const CommandLine = () => (
  <div className="absolute bottom-0 left-[383px] flex h-[39px] w-[1154px] overflow-hidden rounded-t border border-b-2 border-[#6d7077]">
    <div className="flex w-[81px] items-center gap-[13px] bg-[#4a4c50]/90 pl-2">
      <span className="h-7 border-l-2 border-dotted border-[#999]" />
      <Btn label="关闭命令行"><Svg w={14} h={14}><path d="M1 1l12 12M13 1L1 13" stroke="#e6e6e6" strokeWidth="2.5" /></Svg></Btn>
      <Btn label="自定义命令行"><Svg w={22} h={22}><path d="M20 20L9 9" stroke="#ccc" strokeWidth="4" /><path d="M3 5a6 6 0 0 0 9 6c2-3 1-8-3-9v5H6z" fill="#ccc" stroke="none" /></Svg></Btn>
    </div>
    <div className="flex flex-1 items-center gap-2 rounded-l border-l-2 border-white bg-white/70 pr-[5px] pl-[6px]">
      <span className="flex h-5 w-[22px] items-center justify-center rounded-xs border border-[#9a9daa] bg-[#b7bac4]">
        <Svg w={16} h={12}><path d="M1 1l5 4-5 4M8 10h6" stroke="#444a58" strokeWidth="2" /></Svg>
      </span>
      <span className="-ml-1 flex"><Caret color="#555" /></span>
      <input
        aria-label="命令"
        placeholder="键入命令"
        className="ml-1 min-w-0 flex-1 bg-transparent text-xl italic outline-none placeholder:text-[#6e7074]"
      />
      <Btn label="命令历史"><Svg w={12} h={7}><path d="M0 7l6-7 6 7z" fill="#111" stroke="none" /></Svg></Btn>
    </div>
  </div>
);

const Canvas = () => (
  <main className="relative min-h-[600px] flex-1 overflow-hidden bg-[#212631]">
    <Plan />
    <span className="absolute top-[6px] left-[2px] text-lg leading-6 text-[#dcdcdc]">[−][俯视][二维线框]</span>
    <ul className="absolute bottom-[42px] left-[476px] flex flex-col gap-[7px]">
      {[1, 2, 3].map((n) => (
        <li key={n} className="flex h-6 w-14 items-center rounded-xs bg-[#5d6065] font-['Liberation_Mono','Noto_Sans_CJK_SC',monospace] text-xl text-[#c9c9c9]">
          命令:
        </li>
      ))}
    </ul>
    <LayerManager />
    <ViewCube />
    <NavBar />
    <NetMeter />
    <CommandLine />
    <div className="absolute inset-y-0 right-0 flex">
      <span className="w-[10px] bg-[#b2d1f3]" />
      <span className="w-[2px] bg-black" />
      <span className="w-[2px] bg-[#5a5a5a]" />
    </div>
  </main>
);

/* ---------- bottom bars ---------- */

const LayoutTabs = () => (
  <div className="flex h-[30px] items-start border-t-2 border-[#4b4b4b] bg-[#383838] pl-[14px] text-lg leading-[25px]">
    <button type="button" className="relative h-[26px] w-[74px] font-bold text-white">
      <svg className="absolute inset-0 h-full w-full" viewBox="0 0 74 26" preserveAspectRatio="none">
        <path d="M0 0h74c-8 4-6 26-16 26H16C6 26 8 4 0 0z" fill="#7c7c7c" />
      </svg>
      <span className="relative">模型</span>
    </button>
    <button type="button" className="relative h-[26px] w-[80px] text-[#b9b9b9]">
      <svg className="absolute inset-0 h-full w-full" viewBox="0 0 80 26" preserveAspectRatio="none">
        <path d="M0 0h80c-8 4-8 26-18 26H14C4 26 8 4 0 0z" fill="#555" />
      </svg>
      <span className="relative">布局1</span>
    </button>
    <Btn label="新建布局" className="ml-[6px] h-[25px] w-[34px] rounded-tl-2xl rounded-br-2xl bg-[#525252]">
      <Svg w={12} h={12}><path d="M6 0v12M0 6h12" stroke="#ccc" strokeWidth="3" /></Svg>
    </Btn>
  </div>
);

const on = "bg-[#5e8fc9]";
const A = <Caret big />;

const person = <path d="M12 1c2 4 3 7 3 10l6 11-6-3-3 5-3-5-6 3 6-11c0-3 1-6 3-10z" fill="#eee" stroke="none" />;

const drafting = [
  ["推断约束", "w-[38px]", <Svg><path d="M13.5 16V1.5h9v8h-9" /><path d="M1 15h10v8H1z" fill={W} stroke="none" /></Svg>],
  ["动态输入", `w-9 ${on}`, <Svg><path d="M6 2v10M1 7h10" stroke="#fff" /><path d="M10 14h14v7H10z" stroke="#fff" /><path d="M13 14h11v7H13z" fill="#fff" stroke="none" /></Svg>],
  ["正交模式", "w-9", <Svg><path d="M2.5 0v23.5H24M2.5 16.5h6v7" /></Svg>],
  ["极轴追踪", `w-9 ${on}`, <Svg><circle cx="10" cy="13" r="9" stroke="#fff" /><path d="M10 13L20 1M10 13h14M16 6c2 2 3 4 3 7" stroke="#fff" /></Svg>],
  ["极轴追踪列表", "w-6", A],
  ["等轴测草图", "w-9", <Svg><path d="M12 0v24" stroke="#6bbf9a" /><path d="M3 3l18 20" stroke="#c86c6c" /><path d="M10 10h4v4h-4z" fill="#fff" stroke="#555" /></Svg>],
  ["等轴测草图列表", "w-6", A],
  ["对象捕捉追踪", `w-9 ${on}`, <Svg><path d="M18 2L2 22.5h22" stroke="#fff" /><Dot x={10} y={12} c="#fff" /></Svg>],
  ["对象捕捉", `ml-[2px] w-[34px] ${on}`, <Svg><path d="M4.5 4.5h19v19h-19z" stroke="#fff" /><path d="M1.5 1.5h6v6h-6z" stroke="#fff" fill="#5e8fc9" /></Svg>],
  ["对象捕捉列表", "w-6", A],
  ["线宽", "w-9 border-l-2 border-[#666]", <Svg><path d="M0 4h24M13 11h11M13 19h11" strokeWidth="1.5" /><path d="M0 4h13" strokeWidth="3" /><path d="M0 11h13" strokeWidth="4" /><path d="M0 19h13" strokeWidth="5" /></Svg>],
  ["透明度", `w-9 ${on}`, <Svg><path d="M1 1h22v22H1z" fill="#5e8fc9" stroke="#fff" strokeWidth="2" />{[0, 1, 2, 3, 4].map((r) => <path key={r} d={`M${r % 2 ? 6 : 2} ${4 + r * 4}h20`} stroke="#fff" strokeWidth="4" strokeDasharray="4 4" />)}</Svg>],
  ["选择循环", "w-10 border-r-2 border-[#666]", <Svg><path d="M4 0v8M0 4h8M6 21V6h15" /><path d="M9 9h14v14H9z" fill="#7ccf9e" stroke="none" /></Svg>],
  ["三维对象捕捉", "w-10", <Svg><path d="M3.5 18V7.5l6-6h13v14l-6 6H9M3.5 7.5h13v14M16.5 7.5l6-6" /><path d="M.5 17.5h6v6h-6z" stroke="#f0a090" /></Svg>],
  ["三维对象捕捉列表", "w-5", A],
];

const Group = ({ items, children }) => (
  <div className="flex h-full shrink-0 items-stretch border-2 border-b-0 border-[#727272] bg-[#4d4d4d]">
    {items && items.map(([label, cls, icon]) => <Btn key={label} label={label} className={`mt-[2px] ${cls}`}>{icon}</Btn>)}
    {children}
  </div>
);

const StatusBar = () => (
  <footer className="flex h-[38px] justify-end gap-[2px] overflow-hidden border-t border-[#727272] bg-[#383838] text-lg text-white">
    <Group><span className="flex w-[209px] items-center justify-end pr-1 text-[#a3a3a3]">-71250, -112445, 0</span></Group>
    <Group><button type="button" className="w-[42px] font-bold">模型</button></Group>
    <Group
      items={[
        ["栅格", "w-9", <Svg><path d="M6.5 0v24M12.5 0v24M18.5 0v24M0 6.5h24M0 12.5h24M0 18.5h24" /></Svg>],
        ["捕捉", "w-9", <Svg>{[4, 12, 20].map((y) => <path key={y} d={`M2 ${y}h20`} strokeWidth="3" strokeDasharray="3 5" />)}</Svg>],
        ["捕捉列表", "w-6", A],
      ]}
    />
    <Group items={drafting} />
    <Group
      items={[
        ["动态UCS", `w-9 ${on}`, <Svg><path d="M4.5 4v16.5H20" stroke="#fff" strokeWidth="2" /><path d="M4.5 0l4 6h-8zM24 20.5l-6-4v8z" fill="#fff" stroke="none" /><path d="M16 4l-5 8h4l-1 6 6-8h-4z" fill="#fff" stroke="none" /></Svg>],
        ["选择过滤", "w-9", <Svg><path d="M3 4h14v16H3z" /><path d="M3 4l4-3h16v15l-5 4" strokeDasharray="3 2" /><Dot x={3} y={4} /><Dot x={17} y={4} /><Dot x={3} y={20} /><Dot x={17} y={20} /></Svg>],
        ["选择过滤列表", "w-6", A],
        ["小控件", `w-9 ${on}`, <Svg><path d="M12 3v10l-9 6M12 13l9 6M5 16a10 10 0 0 1 4-11M19 16a10 10 0 0 0-4-11M6 22l6 2 6-2" stroke="#fff" /><path d="M10 0h4v4h-4zM0 17h5v4H0zM19 17h5v4h-5zM10 11h4v4h-4z" fill="#5e8fc9" stroke="#fff" /></Svg>],
        ["小控件列表", "w-[19px]", A],
      ]}
    />
    <Group
      items={[
        ["注释可见性", `w-9 ${on}`, <Svg>{person}<circle cx="20" cy="6" r="3.5" stroke="#fff" /></Svg>],
        ["自动缩放", "w-9", <Svg>{person}<path d="M20 1l-4 6h3l-1 4 5-6h-3z" fill="#fff" stroke="#4d4d4d" strokeWidth=".6" /></Svg>],
        ["注释比例", "w-9", <Svg>{person}</Svg>],
        ["比例列表", "w-[108px] gap-2 whitespace-nowrap", <>1:1 / 100%{A}</>],
      ]}
    />
    <Group
      items={[
        ["切换工作空间", "w-9", <BsGearFill size={24} color={W} />],
        ["工作空间列表", "w-6 border-r-2 border-[#666]", A],
        ["注释监视器", "w-9", <Svg><path d="M12 1v22M1 12h22" strokeWidth="3" /></Svg>],
      ]}
    />
    <Group>
      <span className="flex w-9 items-center justify-center"><Svg w={14} h={24}><path d="M0 0h12v24H0z" fill={W} stroke="none" /><path d="M7 4h6M7 8h6M4 12h9M7 16h6M7 20h6" stroke="#4d4d4d" strokeWidth="1.5" /></Svg></span>
      <span className="relative flex items-center">
        <select aria-label="单位" className="w-[108px] appearance-none bg-transparent pl-2 font-bold outline-none"><option>小数</option></select>
        <span className="pointer-events-none absolute right-1"><Caret big /></span>
      </span>
      <Btn label="快捷特性" className="w-9 border-l-2 border-[#666]"><Svg><path d="M3.5.5h17v23h-17z" /><path d="M3 2h18" strokeWidth="3" /><path d="M6 9h3M6 14h3M6 19h3" strokeWidth="3" /><path d="M11 9h7M11 14h7M11 19h7" /></Svg></Btn>
    </Group>
    <Group
      items={[
        ["锁定用户界面", "w-9", <Svg><path d="M10 17.5H.5v-16h20V10" /><path d="M0 3h21" strokeWidth="3" /><path d="M10 16h10v8H10z" fill={W} stroke="none" /><path d="M17 16v-3a3 3 0 0 1 6 0v2" /></Svg>],
        ["锁定列表", "w-6 border-r-2 border-[#666]", A],
        ["隔离对象", "w-9", <Svg><path d="M.5 2.5h9v9h-9zM10 14l5 9H5z" /><circle cx="19" cy="12" r="4.5" /></Svg>],
      ]}
    />
    <Group
      items={[
        ["硬件加速", `mr-1 w-9 ${on}`, <Svg><circle cx="12" cy="12" r="11" stroke="#fff" /><path d="M10 17l9-11" stroke="#fff" strokeWidth="2.5" /></Svg>],
        ["图形信息", "w-[46px] border-x-2 border-[#666]", <Svg w={32} h={32}><path d="M1 1h18l7 7v18H1z" fill="#6eb4f0" stroke="none" /><path d="M19 1v7h7z" fill="#fff" stroke="none" /><path d="M0 21c8-4 12 4 18 9v2H0z" fill="#f5d24a" stroke="none" /><path d="M0 12h22M9 0v20" stroke="#fff" strokeWidth="2" /><path d="M6 9h6v6H6z" fill="#6eb4f0" stroke="#fff" strokeWidth="2" /><path d="M19 24l5 6 8-10" stroke="#2f9e4c" strokeWidth="4" /></Svg>],
        ["全屏显示", "w-[39px]", <Svg><path d="M.5 3.5h23v18H.5z" /><path d="M4 12v6h6M4 18l5-5M20 12V7h-6M20 7l-5 5" /></Svg>],
        ["自定义", "w-[34px]", <Svg><path d="M0 3h24M0 12h24M0 21h24" strokeWidth="3" /></Svg>],
      ]}
    />
  </footer>
);

export default function App() {
  return (
    <div className="h-screen min-h-[900px] bg-[#f4f4f4] px-2 pt-2 pb-[7px] font-['Open_Sans','Noto_Sans_CJK_SC',sans-serif]">
      <div className="relative flex h-full flex-col shadow-[0_0_5px_3px_#8f8f94]">
        <Logo />
        <TitleBar />
        <RibbonTabs />
        <Ribbon />
        <FileTabs />
        <Canvas />
        <LayoutTabs />
        <StatusBar />
      </div>
    </div>
  );
}
